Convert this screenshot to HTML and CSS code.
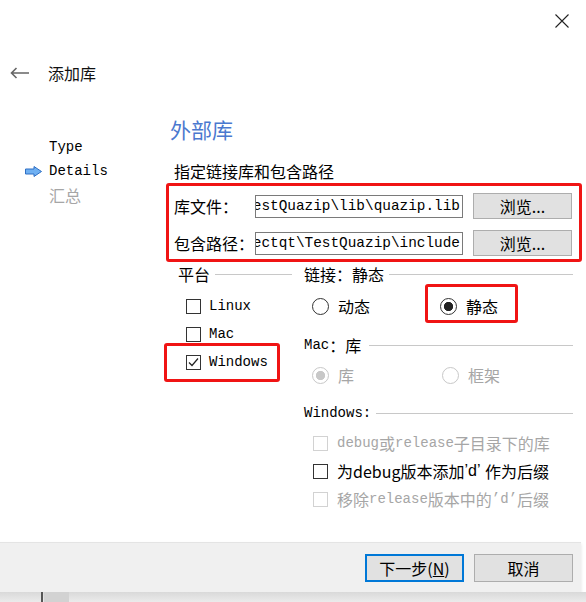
FILE: index.html
```html
<!DOCTYPE html>
<html lang="zh-CN">
<head>
    <meta charset="UTF-8">
    <meta name="viewport" content="width=device-width, initial-scale=1.0">
    <title>添加库</title>
    <link rel="stylesheet" href="styles.css">
</head>
<body>
    <div class="dialog">
        <div class="titlebar">
            <svg class="close" width="14" height="14" viewBox="0 0 14 14">
                <path d="M0.5 0.5 L13.5 13.5 M13.5 0.5 L0.5 13.5" stroke="#222" stroke-width="1.1" fill="none"/>
            </svg>
        </div>

        <div class="header">
            <svg class="back" width="19" height="12" viewBox="0 0 19 12">
                <path d="M1.5 6 H19 M6.5 1 L1.5 6 L6.5 11" stroke="#666" stroke-width="1.6" fill="none"/>
            </svg>
            <span class="title">添加库</span>
        </div>

        <div class="main">
            <!-- wizard steps -->
            <ul class="steps">
                <li><span class="step-mark"></span>Type</li>
                <li class="current">
                    <span class="step-mark">
                        <svg width="17" height="11" viewBox="0 0 17 11">
                            <polygon points="0.5,3 9,3 9,0.5 16.5,5.5 9,10.5 9,8 0.5,8" fill="#6fb0f2" stroke="#2f6fc4" stroke-width="1"/>
                        </svg>
                    </span>Details
                </li>
                <li class="todo"><span class="step-mark"></span>汇总</li>
            </ul>

            <div class="page">
                <h2>外部库</h2>
                <p class="hint">指定链接库和包含路径</p>

                <div class="paths mark">
                    <div class="path-row">
                        <label>库文件：</label>
                        <div class="path-field"><span class="cut">e</span>stQuazip\lib\quazip.lib</div>
                        <button class="btn">浏览...</button>
                    </div>
                    <div class="path-row">
                        <label>包含路径：</label>
                        <div class="path-field"><span class="cut">e</span>ctqt\TestQuazip\include</div>
                        <button class="btn">浏览...</button>
                    </div>
                </div>

                <div class="options">
                    <div class="platform">
                        <div class="group-title">平台</div>
                        <div class="rows">
                            <div class="check"><span class="box"></span><span class="en">Linux</span></div>
                            <div class="check"><span class="box"></span><span class="en">Mac</span></div>
                            <div class="check mark">
                                <span class="box">
                                    <svg width="13" height="13" viewBox="0 0 13 13">
                                        <path d="M2 6.5 L5 9.5 L11 2.5" stroke="#222" stroke-width="1.2" fill="none"/>
                                    </svg>
                                </span><span class="en">Windows</span>
                            </div>
                        </div>
                    </div>

                    <div class="linking">
                        <div class="group-title">链接：静态</div>
                        <div class="radios">
                            <div class="opt wide"><span class="radio"></span>动态</div>
                            <div class="opt mark"><span class="radio on"></span>静态</div>
                        </div>

                        <div class="group-title mac"><span class="en">Mac</span>：库</div>
                        <div class="radios mac-row disabled">
                            <div class="opt wider"><span class="radio on"></span>库</div>
                            <div class="opt"><span class="radio"></span>框架</div>
                        </div>

                        <div class="group-title win"><span class="en">Windows:</span></div>
                        <div class="win-rows">
                            <div class="check disabled"><span class="box"></span><span class="en">debug</span>或<span class="en">release</span>子目录下的库</div>
                            <div class="check"><span class="box"></span>为debug版本添加<span class="q">’d’&nbsp;</span>作为后缀</div>
                            <div class="check disabled"><span class="box"></span>移除<span class="en">release</span>版本中的<span class="en">’d’ </span>后缀</div>
                        </div>
                    </div>
                </div>
            </div>
        </div>

        <div class="footer">
            <button class="btn primary">下一步(<u>N</u>)</button>
            <button class="btn">取消</button>
        </div>
    </div>

    <div class="behind">
        <span class="edge"></span>
        <span class="tab"></span>
    </div>
</body>
</html>
```

FILE: styles.css
```css
* {
    box-sizing: border-box;
}

html, body {
    margin: 0;
}

body {
    width: 586px;
    height: 602px;
    overflow: hidden;
    display: flex;
    flex-direction: column;
    background-color: #fff;
    font-family: "Noto Sans CJK SC", "Liberation Sans", sans-serif;
    font-size: 16px;
    color: #000;
}

.en {
    font-family: "Liberation Mono", "Noto Sans CJK SC", monospace;
    font-size: 14px;
}

.q {
    font-family: "Liberation Sans", sans-serif;
}

.dialog {
    flex: 1;
    display: flex;
    flex-direction: column;
}

.titlebar {
    height: 42px;
    display: flex;
    justify-content: flex-end;
    padding: 14px 17px 0 0;
}

.header {
    height: 26px;
    margin-top: 18px;
    display: flex;
    align-items: center;
    padding-left: 10px;
}

.back {
    margin-right: 19px;
}

.title {
    font-size: 16px;
    color: #111;
}

.main {
    flex: 1;
    display: flex;
}

/* left column with the wizard steps */
.steps {
    width: 166px;
    margin: 0;
    padding: 49px 0 0 25px;
    list-style: none;
}

.steps li {
    height: 24px;
    display: flex;
    align-items: center;
    font-family: "Liberation Mono", "Noto Sans CJK SC", monospace;
    font-size: 14px;
}

.steps .todo {
    font-size: 16px;
    color: #a6a6a6;
}

.step-mark {
    width: 24px;
    display: flex;
    align-items: center;
}

.page {
    flex: 1;
    padding-top: 29px;
}

.page h2 {
    margin: 0;
    padding-left: 4px;
    font-size: 21px;
    font-weight: normal;
    line-height: 28px;
    color: #4a78cf;
}

.hint {
    margin: 16px 0 0;
    padding-left: 8px;
    line-height: 24px;
}

.mark {
    border: 3px solid #f01414;
    border-radius: 3px;
}

.paths {
    width: 416px;
    padding: 7px 7px 3px 5px;
    display: flex;
    flex-direction: column;
    gap: 11px;
}

.path-row {
    height: 26px;
    display: flex;
    align-items: center;
}

.path-row label {
    width: 81px;
}

.path-field {
    width: 208px;
    height: 23px;
    border: 1px solid #7a7a7a;
    padding-right: 2px;
    overflow: hidden;
    display: flex;
    justify-content: flex-end;
    align-items: center;
    white-space: nowrap;
    font-family: "Liberation Mono", monospace;
    font-size: 14.4px;
}

/* the scrolled-off first letter, only its right part shows */
.cut {
    width: 5px;
    overflow: hidden;
    display: inline-flex;
    justify-content: flex-end;
    flex-shrink: 0;
}

.btn {
    width: 99px;
    height: 26px;
    padding: 0;
    background-color: #e1e1e1;
    border: 1px solid #adadad;
    font-family: "Noto Sans CJK SC", sans-serif;
    font-size: 16px;
    color: #000;
}

.path-row .btn {
    margin-left: 10px;
}

/* option groups */
.options {
    display: grid;
    grid-template-columns: 128px 269px;
    column-gap: 12px;
    margin: 2px 0 0 -2px;
}

.group-title {
    height: 20px;
    display: flex;
    align-items: center;
    white-space: nowrap;
}

.group-title::after {
    content: "";
    flex: 1;
    height: 1px;
    margin-left: 5px;
    background-color: #c8c8c8;
}

.platform .group-title {
    padding-left: 14px;
}

.platform .rows {
    margin-top: 8px;
}

.check {
    height: 28px;
    display: flex;
    align-items: center;
    padding-left: 22px;
    white-space: nowrap;
}

.platform .check.mark {
    width: 116px;
    height: 39px;
    margin: -5px 0 -6px;
    padding: 2px 0 3px 19px;
}

.box {
    width: 15px;
    height: 15px;
    margin-right: 8px;
    border: 1px solid #333;
    background-color: #fff;
    display: flex;
    align-items: center;
    justify-content: center;
    flex-shrink: 0;
}

.check.disabled {
    color: #a6a6a6;
}

.check.disabled .box {
    border-color: #d2d2d2;
}

.radios {
    height: 28px;
    margin-top: 8px;
    padding-left: 8px;
    display: flex;
    align-items: center;
}

.opt {
    display: flex;
    align-items: center;
}

.opt.wide {
    width: 113px;
}

.opt.wider {
    width: 130px;
}

.opt.mark {
    height: 39px;
    margin: -8px 0 -3px;
    padding: 5px 17px 0 12px;
}

.radio {
    width: 17px;
    height: 17px;
    margin-right: 9px;
    border: 1px solid #333;
    border-radius: 50%;
    background-color: #fff;
    flex-shrink: 0;
}

.radio.on {
    background: radial-gradient(circle, #222 0 4.3px, #fff 5px);
}

.radios.disabled {
    color: #a6a6a6;
}

.radios.disabled .radio {
    border-color: #c8c8c8;
}

.radios.disabled .radio.on {
    background: radial-gradient(circle, #c8c8c8 0 4.3px, #fff 5px);
}

.group-title.mac {
    margin-top: 15px;
}

.group-title.mac::after {
    margin-left: 8px;
}

.radios.mac-row {
    margin-top: 6px;
}

.group-title.win {
    margin-top: 14px;
}

.win-rows {
    margin-top: 6px;
}

.win-rows .check {
    padding-left: 9px;
}

.win-rows .box {
    margin-right: 9px;
}

/* bottom button bar */
.footer {
    height: 50px;
    margin-right: 5px;
    padding-right: 8px;
    display: flex;
    justify-content: flex-end;
    align-items: center;
    gap: 10px;
    background-color: #f0f0f0;
    border-top: 1px solid #e4e4e4;
    box-shadow: 0 2px 3px rgba(0,0,0,0.12);
}

.footer .btn {
    height: 28px;
}

.btn.primary {
    border: 2px solid #0078d7;
}

.behind {
    height: 10px;
    display: flex;
    background: linear-gradient(#d9d9d9, #ebebeb);
}

.behind .edge {
    width: 2px;
    margin-left: 41px;
    background-color: #555;
}

.behind .tab {
    width: 25px;
    margin-left: 1px;
    background-color: #d2d2d2;
}
```
